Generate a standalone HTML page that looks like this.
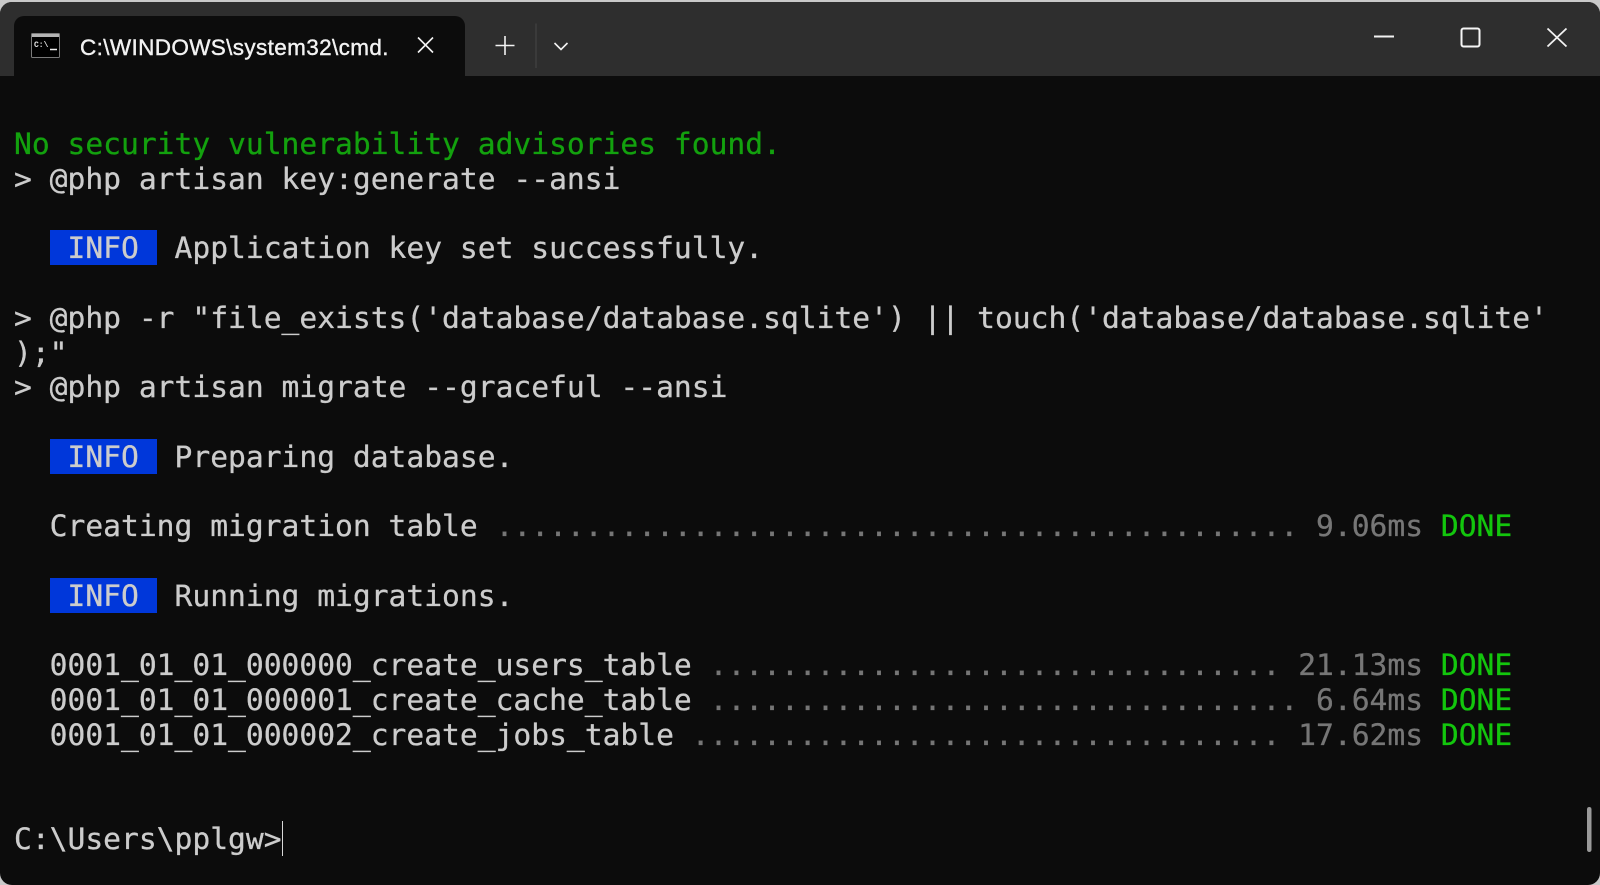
<!DOCTYPE html>
<html>
<head>
<meta charset="utf-8">
<style>
html,body{margin:0;padding:0;width:1600px;height:885px;overflow:hidden;background:#c9c9c9}
#win{position:absolute;left:0;top:2px;width:1600px;height:883px;background:#0c0c0c;border-radius:12px;overflow:hidden}
#bar{position:absolute;left:0;top:0;width:1600px;height:74px;background:#2e2e2e}
#tab{position:absolute;left:14px;top:14px;width:451px;height:60px;background:#0c0c0c;border-radius:10px 10px 0 0}
#title{position:absolute;left:80px;top:32px;font:22.5px/28px "Liberation Sans",sans-serif;color:#f2f2f2;white-space:pre;letter-spacing:.37px;-webkit-text-stroke:.4px #f2f2f2}
#term div{position:absolute;left:14px;height:35px;line-height:35px;font-family:"DejaVu Sans Mono",monospace;font-size:29.63px;white-space:pre;color:#cccccc;-webkit-text-stroke:.3px currentColor}
#term div.g{color:#13a10e}
.d{color:#767676}.k{color:#13c60d}
.i{display:inline-block;height:35px;line-height:35px;vertical-align:top;background:#0037da;color:#cccccc}
svg{position:absolute;left:0;top:0}
</style>
</head>
<body>
<div id="win">
<div id="bar"></div>
<div id="tab"></div>
<div id="title">C:\WINDOWS\system32\cmd.</div>
</div>
<svg width="1600" height="885" viewBox="0 0 1600 885" fill="none">
<rect x="31.5" y="33.5" width="28" height="24" rx="1" fill="#000" stroke="#7a7a7a"/>
<rect x="32" y="34" width="27" height="3" fill="#b4b4b4"/>
<text x="34" y="47" font-family="Liberation Mono,monospace" font-size="8" font-weight="bold" fill="#e0e0e0">C:\</text>
<path d="M50 49.5H57" stroke="#eee" stroke-width="1.5"/>
<path d="M418 37.5L433 52.5M433 37.5L418 52.5" stroke="#f2f2f2" stroke-width="1.6"/>
<path d="M505 36V55M495.500 45.500H514.500" stroke="#f2f2f2" stroke-width="1.6"/>
<path d="M536 23.500V68" stroke="#464646" stroke-width="1"/>
<path d="M554.500 43L561 49.500L567.500 43" stroke="#f2f2f2" stroke-width="1.6"/>
<path d="M1374 36.500H1394" stroke="#f2f2f2" stroke-width="2"/>
<rect x="1461.500" y="28.500" width="18" height="18" rx="2" stroke="#f5f5f5" stroke-width="2"/>
<path d="M1547.500 28.500L1566.500 46.500M1566.500 28.500L1547.500 46.500" stroke="#f2f2f2" stroke-width="1.8"/>
<rect x="1587" y="807" width="4.500" height="45" rx="2.200" fill="#9a9a9a"/>
<rect x="282" y="821" width="1" height="35" fill="#d8d8d8"/>
</svg>
<div id="term">
<div class="g" style="top:126px">No security vulnerability advisories found.</div>
<div style="top:161px">&gt; @php artisan key:generate --ansi</div>
<div style="top:230px">  <span class="i"> INFO </span> Application key set successfully.</div>
<div style="top:300px">&gt; @php -r "file_exists('database/database.sqlite') || touch('database/database.sqlite'</div>
<div style="top:335px">);"</div>
<div style="top:369px">&gt; @php artisan migrate --graceful --ansi</div>
<div style="top:439px">  <span class="i"> INFO </span> Preparing database.</div>
<div style="top:508px">  Creating migration table <span class="d">............................................. 9.06ms</span> <span class="k">DONE</span></div>
<div style="top:578px">  <span class="i"> INFO </span> Running migrations.</div>
<div style="top:647px">  0001_01_01_000000_create_users_table <span class="d">................................ 21.13ms</span> <span class="k">DONE</span></div>
<div style="top:682px">  0001_01_01_000001_create_cache_table <span class="d">................................. 6.64ms</span> <span class="k">DONE</span></div>
<div style="top:717px">  0001_01_01_000002_create_jobs_table <span class="d">................................. 17.62ms</span> <span class="k">DONE</span></div>
<div style="top:821px">C:\Users\pplgw&gt;</div>
</div>
</body>
</html>
